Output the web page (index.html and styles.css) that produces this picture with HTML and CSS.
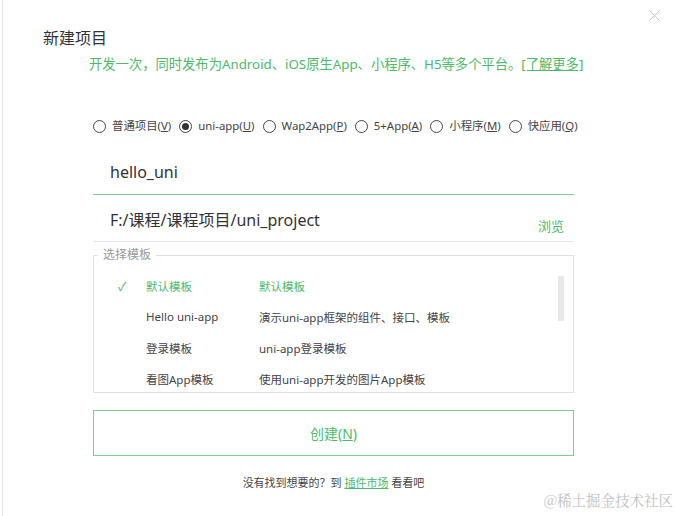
FILE: index.html
```html
<!DOCTYPE html>
<html lang="zh-CN">
<head>
    <meta charset="UTF-8">
    <title>新建项目</title>
    <link rel="stylesheet" href="styles.css">
</head>
<body>
    <div class="dialog">
        <span class="close">
            <svg width="11" height="11" viewBox="0 0 11 11"><path d="M0.5 0.5 L10.5 10.5 M10.5 0.5 L0.5 10.5" stroke="#c8c8c8" stroke-width="1" fill="none"/></svg>
        </span>
        <h1 class="title">新建项目</h1>
        <p class="intro">开发一次，同时发布为Android、iOS原生App、小程序、H5等多个平台。<a href="#">[了解更多]</a></p>

        <div class="body">
            <div class="types">
                <label class="type"><span class="radio"></span><span>普通项目(<u>V</u>)</span></label>
                <label class="type"><span class="radio on"></span><span>uni-app(<u>U</u>)</span></label>
                <label class="type"><span class="radio"></span><span>Wap2App(<u>P</u>)</span></label>
                <label class="type"><span class="radio"></span><span>5+App(<u>A</u>)</span></label>
                <label class="type"><span class="radio"></span><span>小程序(<u>M</u>)</span></label>
                <label class="type"><span class="radio"></span><span>快应用(<u>Q</u>)</span></label>
            </div>

            <div class="field active">
                <span class="value">hello_uni</span>
            </div>
            <div class="field">
                <span class="value">F:/课程/课程项目/uni_project</span>
                <a class="browse" href="#">浏览</a>
            </div>

            <fieldset class="templates">
                <legend>选择模板</legend>
                <div class="rows">
                    <div class="row selected">
                        <span class="check">✓</span>
                        <span class="name">默认模板</span>
                        <span class="desc">默认模板</span>
                    </div>
                    <div class="row">
                        <span class="check"></span>
                        <span class="name">Hello uni-app</span>
                        <span class="desc">演示uni-app框架的组件、接口、模板</span>
                    </div>
                    <div class="row">
                        <span class="check"></span>
                        <span class="name">登录模板</span>
                        <span class="desc">uni-app登录模板</span>
                    </div>
                    <div class="row">
                        <span class="check"></span>
                        <span class="name">看图App模板</span>
                        <span class="desc">使用uni-app开发的图片App模板</span>
                    </div>
                </div>
                <div class="scrollbar"></div>
            </fieldset>

            <button class="create">创建(<u>N</u>)</button>

            <p class="more">没有找到想要的？到 <a href="#">插件市场</a> 看看吧</p>
        </div>
        <span class="mark">@稀土掘金技术社区</span>
    </div>
</body>
</html>
```

FILE: styles.css
```css
body {
    margin: 0;
    background: #fff;
    font-family: "Noto Sans", "Noto Sans CJK SC", sans-serif;
    color: #333;
}

.dialog {
    position: relative;
    margin-left: 2px;
    height: 516px;
    border-left: 1px solid #e2e2e2;
    overflow: hidden;
}

.close {
    position: absolute;
    top: 10px;
    left: 646px;
    line-height: 0;
}

.title {
    margin: 0;
    padding: 28px 0 0 40px;
    font-size: 16px;
    font-weight: normal;
    line-height: 20px;
    color: #333;
}

.intro {
    margin: 7px 0 0 86px;
    font-size: 13.3px;
    line-height: 18px;
    color: #4dba69;
    white-space: nowrap;
}

.intro a {
    color: #4dba69;
}

.body {
    width: 481px;
    margin: 45px 0 0 90px;
}

.types {
    display: flex;
    align-items: center;
    gap: 8px;
    font-size: 11.4px;
    line-height: 16px;
    color: #444;
    white-space: nowrap;
}

.type {
    display: flex;
    align-items: center;
}

.radio {
    width: 11px;
    height: 11px;
    border: 1px solid #444;
    border-radius: 50%;
    margin-right: 6px;
    position: relative;
}

.radio.on::after {
    content: "";
    position: absolute;
    left: 2px;
    top: 2px;
    width: 7px;
    height: 7px;
    border-radius: 50%;
    background: #333;
}

.field {
    display: flex;
    align-items: flex-end;
    justify-content: space-between;
    height: 46px;
    padding: 0 17px 0 17px;
    border-bottom: 1px solid #e6e6e6;
}

.field.active {
    margin-top: 14px;
    border-bottom-color: #7fd08f;
}

.field .value {
    font-size: 16px;
    line-height: 22px;
    padding-bottom: 10px;
    color: #333;
}

.field.active .value {
    padding-bottom: 11px;
}

.browse {
    font-size: 13px;
    line-height: 18px;
    padding-bottom: 6px;
    color: #4dba69;
    text-decoration: none;
    margin-right: -7px;
}

.templates {
    position: relative;
    margin: 6px 0 0;
    padding: 8px 0 0;
    border: 1px solid #e0e0e0;
    box-sizing: border-box;
    height: 145px;
}

.templates legend {
    margin-left: 4px;
    padding: 0 5px;
    font-size: 12px;
    line-height: 14px;
    color: #999;
}

.rows {
    display: flex;
    flex-direction: column;
}

.row {
    display: flex;
    align-items: center;
    height: 31px;
    font-size: 11.5px;
    color: #444;
}

.row.selected {
    color: #4dba69;
}

.check {
    width: 52px;
    padding-left: 24px;
    box-sizing: border-box;
    color: #4dba69;
    font-size: 12px;
}

.name {
    width: 113px;
}

.scrollbar {
    position: absolute;
    right: 9px;
    top: 14px;
    width: 6px;
    height: 45px;
    background: #e8e8e8;
}

.create {
    display: block;
    width: 481px;
    height: 46px;
    margin-top: 17px;
    border: 1px solid #7fd08f;
    background: #fff;
    font-family: inherit;
    font-size: 14px;
    color: #4dba69;
}

.more {
    margin: 18px 0 0;
    text-align: center;
    font-size: 11px;
    color: #444;
}

.more a {
    color: #4dba69;
}

.mark {
    position: absolute;
    right: 2px;
    bottom: 6px;
    font-family: "Noto Serif CJK SC", "Noto Sans CJK SC", serif;
    font-size: 14.5px;
    color: #c0c0c0;
}
```
